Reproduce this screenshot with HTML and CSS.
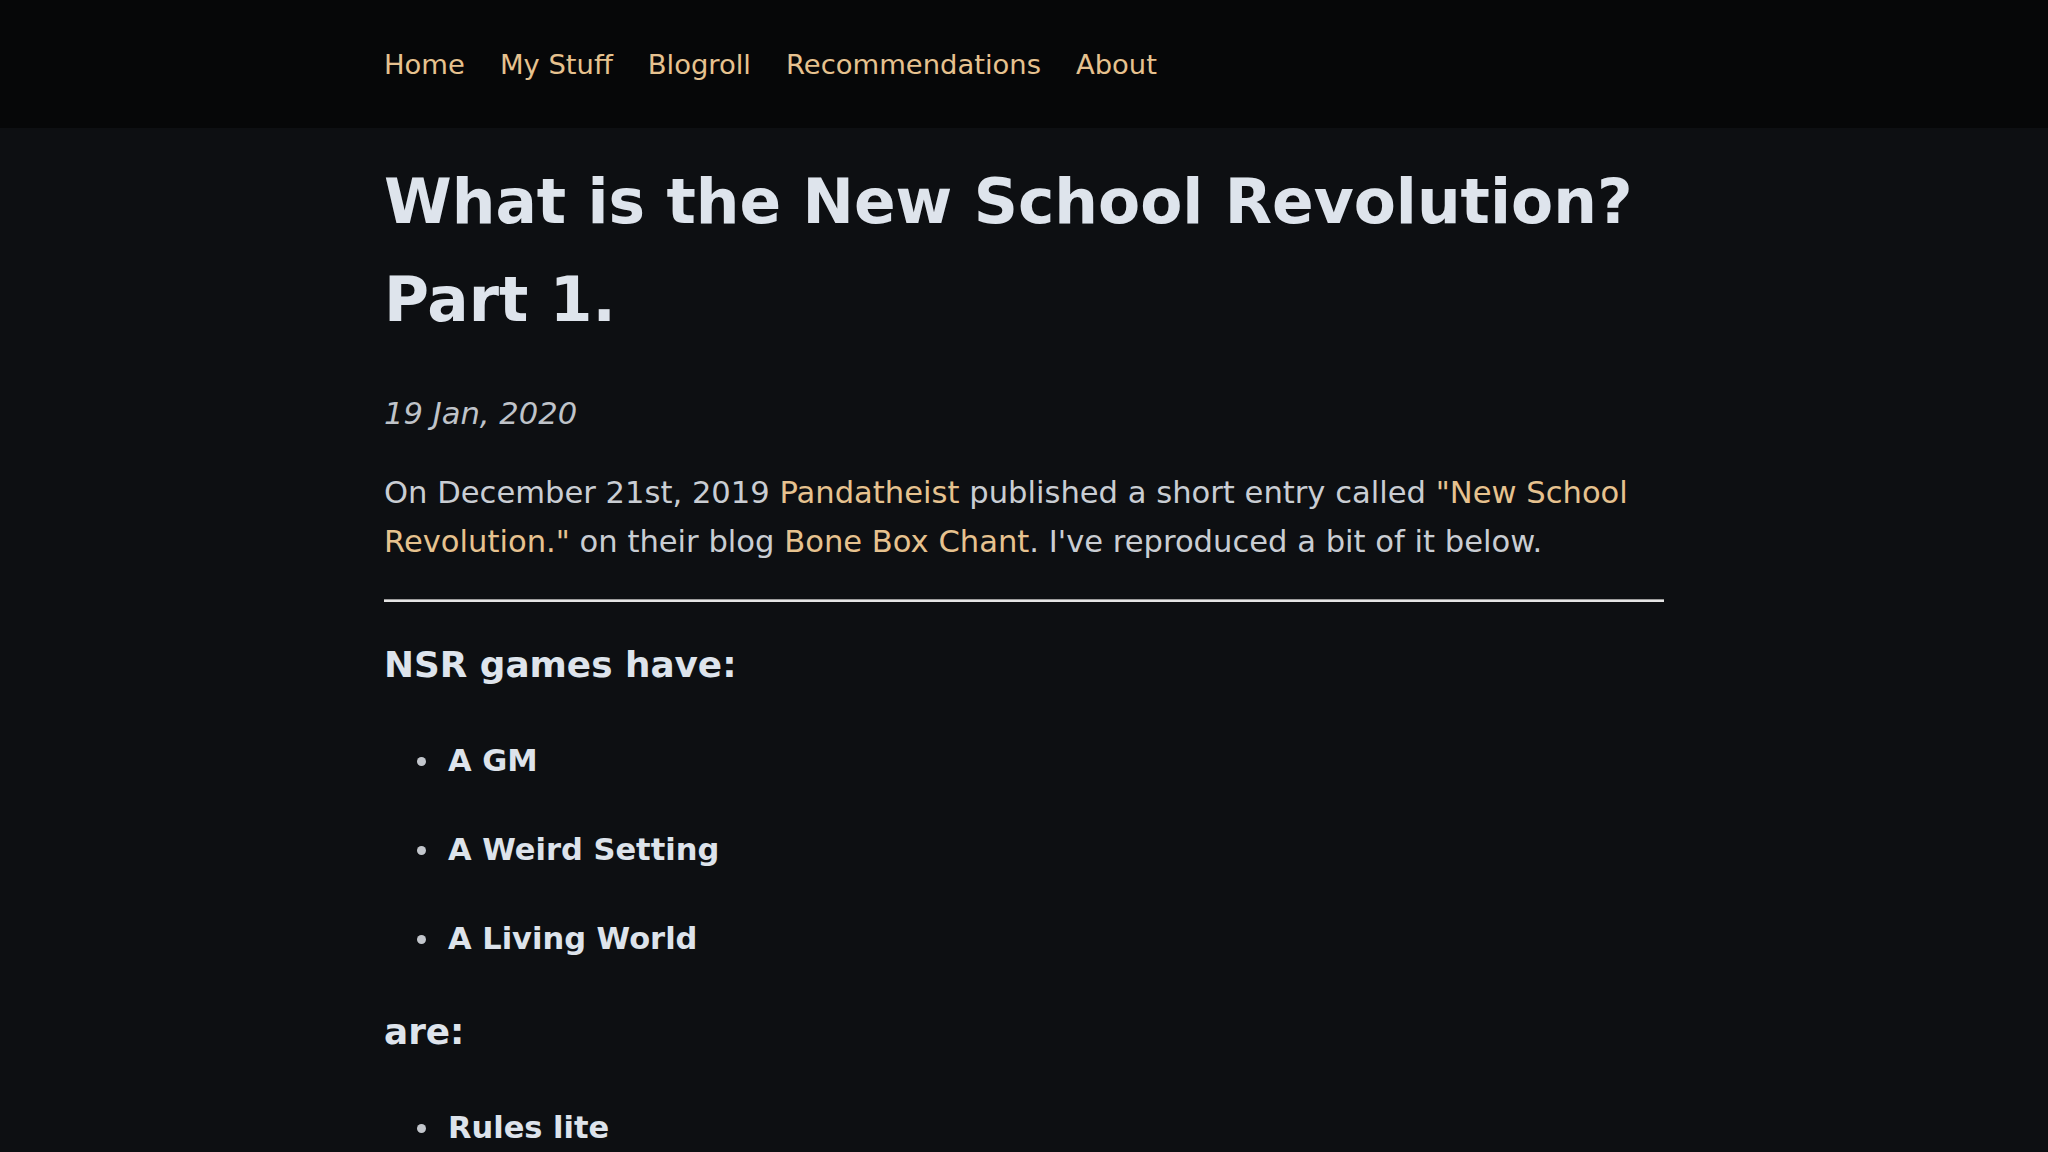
FILE: index.html
```html
<!DOCTYPE html>
<html lang="en">
<head>
<meta charset="utf-8">
<title>What is the New School Revolution? Part 1.</title>
<link rel="stylesheet" href="styles.css">
</head>
<body>
<header class="site-nav">
  <nav class="nav-inner">
    <a href="#">Home</a>
    <a href="#">My Stuff</a>
    <a href="#">Blogroll</a>
    <a href="#">Recommendations</a>
    <a href="#">About</a>
  </nav>
</header>
<main class="post">
  <h1 class="post-title">What is the New School Revolution? Part 1.</h1>
  <p class="post-date">19 Jan, 2020</p>
  <p class="intro">On December 21st, 2019 <a href="#">Pandatheist</a> published a short entry called <a href="#">"New School Revolution."</a> on their blog <a href="#">Bone Box Chant</a>. I've reproduced a bit of it below.</p>
  <hr class="rule">
  <h2 class="sub">NSR games have:</h2>
  <ul class="points">
    <li>A GM</li>
    <li>A Weird Setting</li>
    <li>A Living World</li>
  </ul>
  <h2 class="sub">are:</h2>
  <ul class="points">
    <li>Rules lite</li>
    <li>Player-facing</li>
  </ul>
</main>
</body>
</html>
```
FILE: styles.css
```css
html, body {
  margin: 0;
  padding: 0;
}
body {
  background: #0d0f12;
  color: #c9cdd3;
  font-family: "DejaVu Sans", "Liberation Sans", sans-serif;
  font-size: 30.6px;
  line-height: 49.6px;
}
a {
  color: #e6c28f;
  text-decoration: none;
}
.site-nav {
  background: #060708;
  height: 128px;
}
.nav-inner {
  width: 1280px;
  margin: 0 auto;
  height: 128px;
  display: flex;
  align-items: center;
  gap: 35px;
  font-size: 27.4px;
  line-height: 36px;
  padding-top: 1px;
  box-sizing: border-box;
}
.post {
  width: 1280px;
  margin: 0 auto;
  padding-top: 25px;
}
.post-title {
  margin: 0;
  font-size: 61.4px;
  line-height: 98px;
  font-weight: bold;
  color: #dee4ec;
}
.post-date {
  margin: 40px 0 0;
  font-style: italic;
  color: #bfc3c9;
}
.intro {
  margin: 29px 0 0;
}
.rule {
  margin: 32px 0 0;
  border: 0;
  border-top: 1px solid #9a9a9a;
  height: 2px;
  background: #e4e4e4;
}
.sub {
  margin: 34px 0 0;
  font-size: 35.8px;
  line-height: 58px;
  font-weight: bold;
  color: #dee4ec;
}
.sub + .points {
  margin-top: 42px;
}
.points {
  margin: 0;
  padding-left: 64px;
  list-style: none;
}
.points li {
  position: relative;
  font-size: 30.5px;
  line-height: 49.4px;
  font-weight: bold;
  color: #dde3eb;
  margin-bottom: 39.5px;
}
.points li::before {
  content: "";
  position: absolute;
  left: -31px;
  top: calc(50% - 3px);
  width: 9px;
  height: 9px;
  border-radius: 50%;
  background: #c2c6cc;
}
.points + .sub {
  margin-top: 0;
}
```
